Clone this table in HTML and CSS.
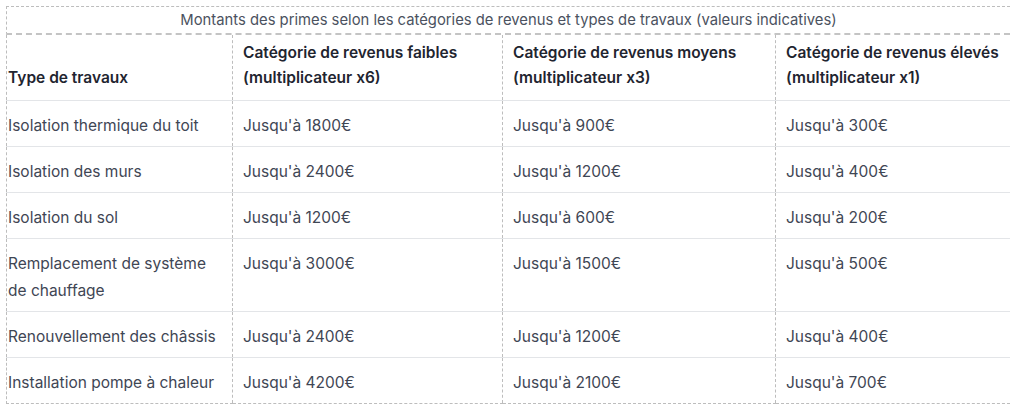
FILE: index.html
```html
<!DOCTYPE html>
<html lang="fr">
<head>
<meta charset="utf-8">
<title>Montants des primes</title>
<link rel="stylesheet" href="styles.css">
</head>
<body>
<table class="primes">
  <caption>Montants des primes selon les catégories de revenus et types de travaux (valeurs indicatives)</caption>
  <colgroup>
    <col class="c1"><col class="c2"><col class="c3"><col class="c4">
  </colgroup>
  <thead>
    <tr>
      <th>Type de travaux</th>
      <th>Catégorie de revenus faibles (multiplicateur x6)</th>
      <th>Catégorie de revenus moyens (multiplicateur x3)</th>
      <th>Catégorie de revenus élevés (multiplicateur x1)</th>
    </tr>
  </thead>
  <tbody>
    <tr><td>Isolation thermique du toit</td><td>Jusqu'à 1800€</td><td>Jusqu'à 900€</td><td>Jusqu'à 300€</td></tr>
    <tr><td>Isolation des murs</td><td>Jusqu'à 2400€</td><td>Jusqu'à 1200€</td><td>Jusqu'à 400€</td></tr>
    <tr><td>Isolation du sol</td><td>Jusqu'à 1200€</td><td>Jusqu'à 600€</td><td>Jusqu'à 200€</td></tr>
    <tr><td>Remplacement de système de chauffage</td><td>Jusqu'à 3000€</td><td>Jusqu'à 1500€</td><td>Jusqu'à 500€</td></tr>
    <tr><td>Renouvellement des châssis</td><td>Jusqu'à 2400€</td><td>Jusqu'à 1200€</td><td>Jusqu'à 400€</td></tr>
    <tr><td>Installation pompe à chaleur</td><td>Jusqu'à 4200€</td><td>Jusqu'à 2100€</td><td>Jusqu'à 700€</td></tr>
  </tbody>
</table>
</body>
</html>
```
FILE: styles.css
```css
html, body {
  margin: 0;
  padding: 0;
  background: #ffffff;
  overflow: hidden;
}

body {
  font-family: Inter, "DejaVu Sans", sans-serif;
  font-size: 15.5px;
  color: #3f4654;
}

.primes {
  border-collapse: collapse;
  table-layout: fixed;
  width: 1004px;
  margin: 6px 0 0 6px;
  border-left: 1px dashed #bdbdbd;
  border-bottom: 1px dashed #bdbdbd;
}

.primes caption {
  border: 1px dashed #bdbdbd;
  border-right: none;
  border-bottom: 2px dashed #c4c4c4;
  line-height: 26px;
  font-size: 14.8px;
  color: #4b5260;
  text-align: center;
}

.c1 { width: 226px; }
.c2 { width: 270px; }
.c3 { width: 273px; }

.primes th,
.primes td {
  text-align: left;
  border-left: 1px dashed #bdbdbd;
  border-bottom: 1px solid #e3e5e8;
  padding: 0 6px 0 10px;
}

.primes th:first-child,
.primes td:first-child {
  padding-left: 1px;
}

.primes th {
  font-weight: 600;
  color: #1f2530;
  line-height: 25px;
  vertical-align: bottom;
  padding-top: 5px;
  padding-bottom: 10px;
}

.primes td {
  line-height: 27px;
  vertical-align: top;
  padding-top: 11px;
  padding-bottom: 7px;
}

.primes tbody tr:last-child td {
  border-bottom: 1px dashed #bdbdbd;
}
```
